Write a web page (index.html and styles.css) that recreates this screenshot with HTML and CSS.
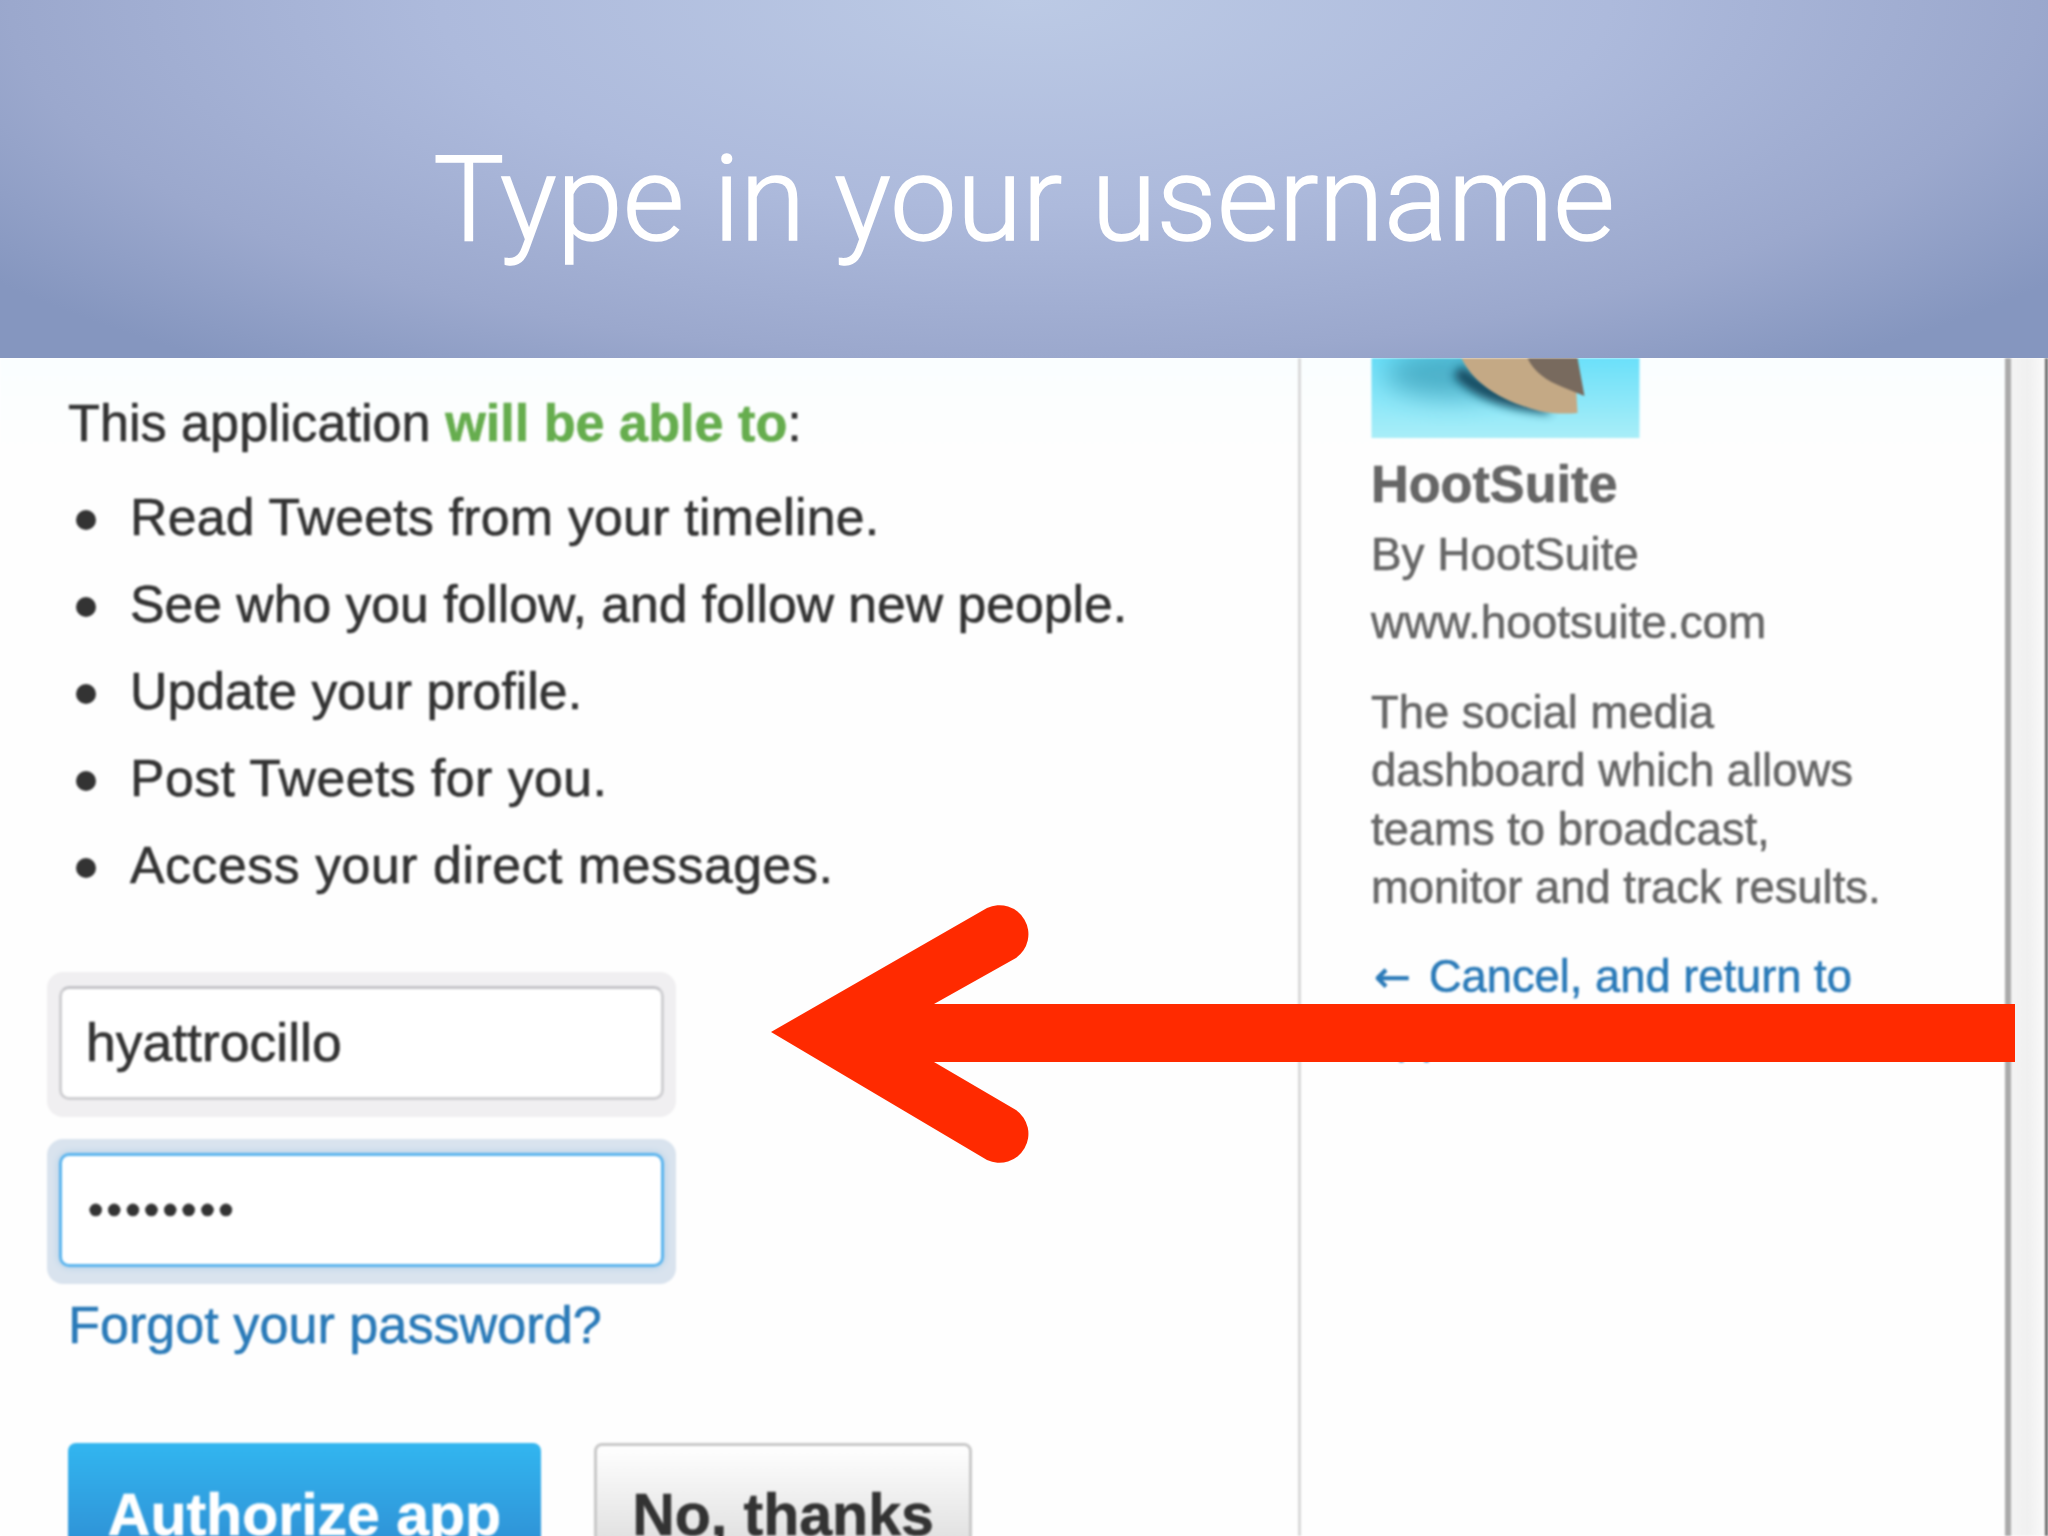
FILE: index.html
```html
<!DOCTYPE html>
<html lang="en">
<head>
<meta charset="utf-8">
<title>Type in your username</title>
<link rel="stylesheet" href="styles.css">
</head>
<body>
<div class="slide">
  <header class="banner"><h1 class="title">Type in your username</h1></header>
  <main class="shot">
    <div class="shot-inner">
      <section class="left">
        <p class="lead">This application <strong class="green">will be able to</strong>:</p>
        <ul class="perms">
          <li>Read Tweets from your timeline.</li>
          <li>See who you follow, and follow new people.</li>
          <li>Update your profile.</li>
          <li>Post Tweets for you.</li>
          <li>Access your direct messages.</li>
        </ul>
        <div class="halo"><div class="field">hyattrocillo</div></div>
        <div class="halo halo-focus"><div class="field field-focus">••••••••</div></div>
        <a class="forgot">Forgot your password?</a>
        <div class="buttons">
          <div class="btn btn-primary">Authorize app</div>
          <div class="btn btn-plain">No, thanks</div>
        </div>
      </section>
      <aside class="side">
        <div class="app-pic">
          <svg class="owl" viewBox="0 0 268 80" width="269" height="80">
            <defs>
              <linearGradient id="sky" x1="0" y1="0" x2="0" y2="1">
                <stop offset="0" stop-color="#6be0fa"/><stop offset="1" stop-color="#a9eef8"/>
              </linearGradient>
              <filter id="wide" x="-50%" y="-100%" width="200%" height="300%"><feGaussianBlur stdDeviation="13"/></filter>
              <filter id="soft" x="-30%" y="-80%" width="160%" height="260%"><feGaussianBlur stdDeviation="5"/></filter>
            </defs>
            <rect width="268" height="80" fill="url(#sky)"/>
            <ellipse cx="80" cy="16" rx="66" ry="24" fill="#2f8ea8" opacity=".6" filter="url(#wide)"/>
            <path d="M82 18 C100 38 130 52 180 56 L170 42 C140 36 110 24 90 8Z" fill="#0a3c52" opacity=".9" filter="url(#soft)"/>
            <path d="M90 0 C100 22 125 42 168 53 C182 56 195 56 206 55 L205 37 L206 0Z" fill="#c4a985"/>
            <path d="M156 0 C162 14 176 23 191 29 L213 38 L206 0Z" fill="#786a5e"/>
          </svg>
        </div>
        <h2 class="app-name">HootSuite</h2>
        <p class="app-meta">By HootSuite</p>
        <p class="app-meta">www.hootsuite.com</p>
        <p class="app-desc">The social media<br>dashboard which allows<br>teams to broadcast,<br>monitor and track results.</p>
        <a class="cancel"><span class="cancel-arrow">←</span>Cancel, and return to<br>app</a>
      </aside>
      <div class="scrollbar"></div>
    </div>
    <svg class="pointer" viewBox="0 0 1300 260" width="1300" height="260">
      <path d="M-2 116 L214 -8 A29 29 0 0 1 243 42 L161 88 L1242 88 L1242 146 L161 146 L243 194 A29 29 0 0 1 214 244 Z" fill="#ff2a00"/>
    </svg>
  </main>
</div>
</body>
</html>
```
FILE: styles.css
```css
html, body { margin: 0; padding: 0; background: #fff; }
.slide { width: 2048px; height: 1536px; overflow: hidden; display: flex; flex-direction: column; }
.banner {
  height: 358px; flex: none;
  background: radial-gradient(ellipse 1300px 460px at 1024px 0, #bccae5 0%, #adbadc 45%, #9ba8cd 78%, #8596bf 100%);
  display: flex; justify-content: center;
}
.title {
  margin: 140px 0 0; font: 300 119px/1 Roboto, sans-serif; color: #fff; white-space: nowrap; -webkit-text-stroke: 1.5px #fff;
}
.shot { position: relative; flex: 1; overflow: hidden; }
.shot-inner {
  display: flex; height: 100%; filter: blur(1px);
  background: linear-gradient(#fafeff, #fefefe 90px);
  font-family: "Liberation Sans", Arial, sans-serif;
  -webkit-text-stroke: .6px currentColor;
}
.left { width: 1298px; flex: none; box-sizing: border-box; padding: 35px 0 0 68px; color: #333; }
.lead { margin: 0; font-size: 52.2px; line-height: 60px; color: #333; }
.green { color: #66ad4e; }
.perms { list-style: none; margin: 21px 0 0; padding: 0; font-size: 51.7px; line-height: 87px; }
.perms li { display: flex; align-items: center; }
.perms li:nth-child(1) { letter-spacing: .3px; }
.perms li:nth-child(3) { letter-spacing: .05px; }
.perms li:nth-child(4) { letter-spacing: .5px; }
.perms li:nth-child(5) { letter-spacing: .6px; }
.perms li::before { content: ""; width: 20px; height: 20px; border-radius: 50%; background: #333; margin: 4px 34px 0 8px; flex: none; }
.halo { width: 629px; height: 145px; box-sizing: border-box; padding: 14px 12px; margin: 0 0 22px -21px; border-radius: 16px; background: #f0eff1; }
.perms + .halo { margin-top: 63px; }
.halo-focus { background: #d9e3ee; margin-bottom: 11px; }
.field {
  height: 114px; box-sizing: border-box; border: 3px solid #cfcfd2; border-top-color: #c4c4c8; border-radius: 10px; background: #fff;
  font-size: 53.5px; line-height: 108px; padding-left: 24px; color: #333;
}
.field-focus { border-color: #5cb5ee; font-size: 44px; letter-spacing: 3.2px; padding-left: 26px; box-shadow: 0 0 7px #a9cbe6; }
.forgot { display: block; font-size: 52.2px; line-height: 60px; color: #2a7ab8; }
.buttons { display: flex; gap: 53px; margin-top: 88px; }
.btn { height: 140px; box-sizing: border-box; border-radius: 8px 8px 0 0; font-size: 59px; font-weight: 700; text-align: center; padding-top: 38px; }
.btn-primary { width: 473px; background: linear-gradient(#32b6f0, #2f8fd4 110px); color: #fff; }
.btn-plain { width: 378px; background: linear-gradient(#fff, #dcdcdc 110px); border: 3px solid #c8c8c8; color: #333; padding-top: 35px; }
.side { width: 707px; flex: none; box-sizing: border-box; border-left: 3px solid #d9d9d9; padding-left: 70px; color: #666; }
.app-pic { width: 269px; height: 80px; }
.owl { display: block; }
.app-name { margin: 16px 0 0; font-size: 52.2px; line-height: 60px; font-weight: 700; color: #666; }
.app-meta { margin: 0; font-size: 45.9px; line-height: 68px; }
.app-name + .app-meta { margin-top: 6px; }
.app-desc { margin: 28px 0 0; font-size: 45.4px; line-height: 58.3px; }
.cancel { display: block; margin-top: 30px; font-size: 45.3px; line-height: 60px; color: #2a7ab8; }
.cancel-arrow { font-family: "DejaVu Sans", sans-serif; font-size: 44px; margin: 0 18px 0 3px; }
.scrollbar { flex: 1; border-left: 6px solid #aaa; border-right: 3px solid #666; background: linear-gradient(90deg, #f4f4f4, #f0f0f0 50%, #fafafa); }
.pointer { position: absolute; left: 773px; top: 558px; overflow: visible; }
```
